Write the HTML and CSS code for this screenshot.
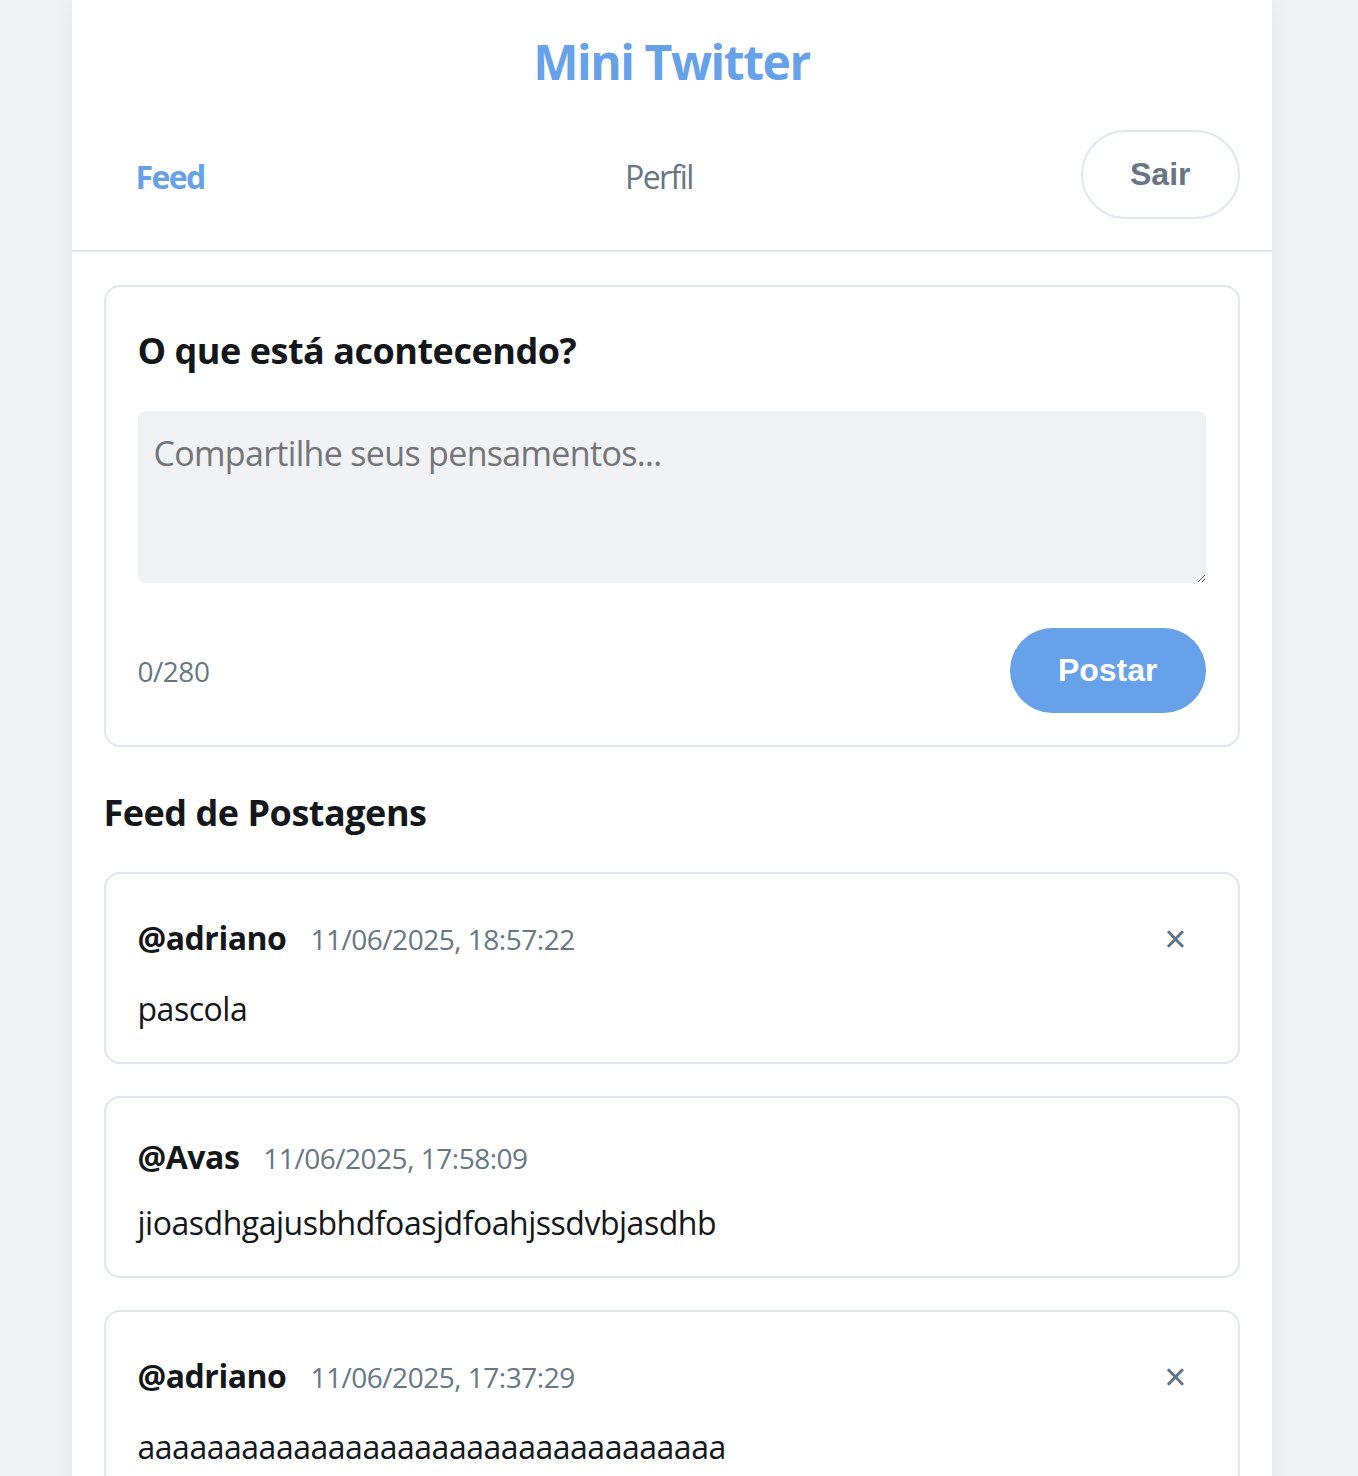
FILE: index.html
```html
<!DOCTYPE html>
<html lang="pt-BR">
<head>
<meta charset="utf-8">
<title>Mini Twitter</title>
<link rel="stylesheet" href="styles.css">
</head>
<body>
<div class="app">
  <header class="header">
    <h1 class="title">Mini Twitter</h1>
    <nav class="nav">
      <a class="nav-link active" href="#">Feed</a>
      <a class="nav-link" href="#">Perfil</a>
      <button class="logout" type="button">Sair</button>
    </nav>
  </header>
  <main class="main">
    <section class="card composer">
      <h3 class="composer-title">O que está acontecendo?</h3>
      <textarea class="composer-input" placeholder="Compartilhe seus pensamentos..."></textarea>
      <div class="composer-footer">
        <span class="counter">0/280</span>
        <button class="post-btn" type="button">Postar</button>
      </div>
    </section>

    <h3 class="feed-title">Feed de Postagens</h3>

    <div class="feed">
      <article class="card post">
        <div class="post-header">
          <div class="post-meta">
            <span class="post-user">@adriano</span>
            <span class="post-date">11/06/2025, 18:57:22</span>
          </div>
          <button class="delete-btn" type="button">×</button>
        </div>
        <p class="post-text">pascola</p>
      </article>

      <article class="card post">
        <div class="post-header">
          <div class="post-meta">
            <span class="post-user">@Avas</span>
            <span class="post-date">11/06/2025, 17:58:09</span>
          </div>
        </div>
        <p class="post-text">jioasdhgajusbhdfoasjdfoahjssdvbjasdhb</p>
      </article>

      <article class="card post">
        <div class="post-header">
          <div class="post-meta">
            <span class="post-user">@adriano</span>
            <span class="post-date">11/06/2025, 17:37:29</span>
          </div>
          <button class="delete-btn" type="button">×</button>
        </div>
        <p class="post-text">aaaaaaaaaaaaaaaaaaaaaaaaaaaaaaaaaa</p>
      </article>
    </div>
  </main>
</div>
</body>
</html>
```

FILE: styles.css
```css
* {
  box-sizing: border-box;
}

body {
  margin: 0;
  padding-right: 15px;
  background: #f0f2f5;
  font-family: "Open Sans", "Noto Sans", sans-serif;
  color: #14171a;
  letter-spacing: -0.03em;
}

.app {
  width: 1200px;
  margin: 0 auto;
  background: #ffffff;
  min-height: 100vh;
  box-shadow: 0 0 20px rgba(0, 0, 0, 0.06);
}

.header {
  padding-top: 30px;
  border-bottom: 2px solid #e1e8ed;
}

.title {
  margin: 0;
  text-align: center;
  font-size: 48px;
  line-height: 64px;
  font-weight: 700;
  letter-spacing: -0.03em;
  color: #66a1e9;
}

.nav {
  display: flex;
  justify-content: space-between;
  align-items: center;
  padding: 36px 32px 31px;
}

.nav-link {
  padding: 4px 32px 0;
  font-size: 32px;
  line-height: 42px;
  letter-spacing: -0.05em;
  color: #657786;
  text-decoration: none;
}

.nav-link.active {
  color: #66a1e9;
  font-weight: 700;
}

.logout {
  font-family: "Liberation Sans", Arial, sans-serif;
  font-size: 32px;
  font-weight: 700;
  letter-spacing: 0;
  color: #657786;
  background: #ffffff;
  border: 2px solid #e1e8ed;
  border-radius: 999px;
  padding: 24px 47px;
  line-height: normal;
}

.main {
  padding: 33px 32px 32px;
}

.card {
  border: 2px solid #e1e8ed;
  border-radius: 16px;
  background: #ffffff;
  padding: 32px;
}

.composer-title {
  margin: 8px 0 36px;
  font-size: 36px;
  line-height: 48px;
  font-weight: 700;
}

.composer-input {
  display: block;
  width: 100%;
  height: 172px;
  border: none;
  border-radius: 8px;
  background: #f0f2f5;
  padding: 19px 16px;
  font-family: inherit;
  font-size: 34px;
  line-height: 46px;
  letter-spacing: -0.02em;
  color: #14171a;
}

.composer-input::placeholder {
  color: #757575;
}

.composer-footer {
  display: flex;
  justify-content: space-between;
  align-items: center;
  margin-top: 45px;
}

.counter {
  font-size: 28px;
  color: #657786;
}

.post-btn {
  font-family: "Liberation Sans", Arial, sans-serif;
  font-size: 32px;
  font-weight: 700;
  letter-spacing: 0;
  color: #ffffff;
  background: #66a1e9;
  border: none;
  border-radius: 999px;
  padding: 24px 48px;
  line-height: normal;
}

.feed-title {
  margin: 42px 0 35px;
  font-size: 36px;
  line-height: 48px;
  font-weight: 700;
}

.feed {
  display: flex;
  flex-direction: column;
  gap: 32px;
}

.post-header {
  display: flex;
  justify-content: space-between;
  align-items: center;
  margin-bottom: 17px;
}

.post-meta {
  display: flex;
  align-items: baseline;
  gap: 24px;
  line-height: 54px;
}

.post-user {
  font-size: 32px;
  font-weight: 700;
}

.post-date {
  font-size: 28px;
  color: #657786;
}

.delete-btn {
  font-family: "Liberation Sans", Arial, sans-serif;
  font-size: 38px;
  line-height: 44px;
  color: #5f7282;
  background: none;
  border: none;
  padding: 11px 19px 10px;
}

.post-text {
  margin: 0;
  font-size: 32px;
  line-height: 42px;
}
```
